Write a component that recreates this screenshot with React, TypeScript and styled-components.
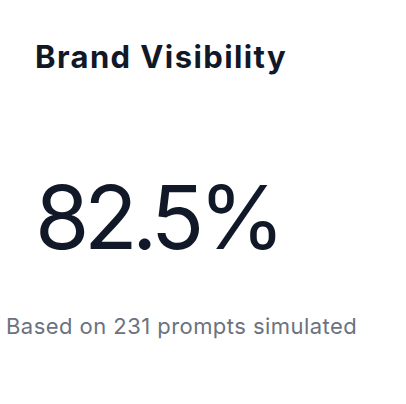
import React from "react";
import styled, { createGlobalStyle } from "styled-components";

const Global = createGlobalStyle`
  html, body { margin: 0; padding: 0; background: #ffffff; }
  body { font-family: Inter, "Noto Sans", sans-serif; }
`;

const Card = styled.div`
  width: 406px;
  height: 404px;
  box-sizing: border-box;
  display: flex;
  flex-direction: column;
  background: #ffffff;
`;

const Title = styled.h2`
  margin: 37px 0 0 35px;
  font-size: 31px;
  font-weight: 700;
  line-height: 40px;
  letter-spacing: 1.4px;
  color: #111827;
`;

const Value = styled.div`
  margin: 90px 0 0 35px;
  font-size: 88px;
  font-weight: 400;
  line-height: 100px;
  letter-spacing: -5.5px;
  color: #111827;
`;

const Note = styled.p`
  margin: 45px 0 0 6px;
  font-size: 22px;
  line-height: 28px;
  letter-spacing: 0.45px;
  color: #6b7280;
`;

export default function App() {
  return (
    <>
      <Global />
      <Card>
        <Title>Brand Visibility</Title>
        <Value>82.5%</Value>
        <Note>Based on 231 prompts simulated</Note>
      </Card>
    </>
  );
}
